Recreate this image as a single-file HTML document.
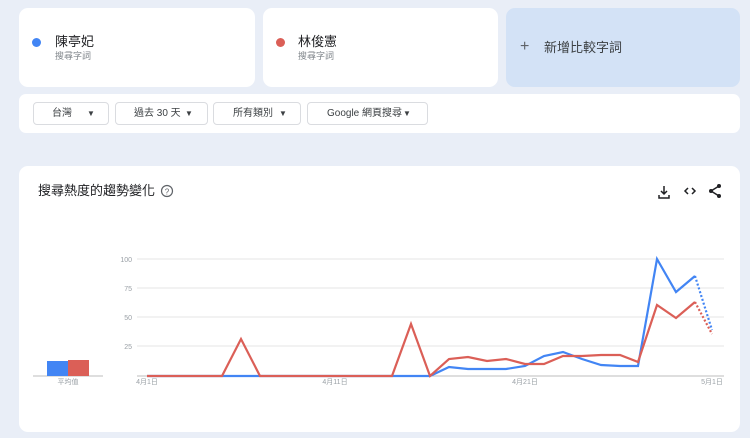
<!DOCTYPE html>
<html><head><meta charset="utf-8"><style>
*{margin:0;padding:0;box-sizing:border-box}
body{width:750px;height:438px;background:#e9eef7;font-family:"Liberation Sans","Noto Sans CJK TC",sans-serif;position:relative;overflow:hidden;color:#202124}
.card{position:absolute;background:#fff;border-radius:9px}
.dot{position:absolute;width:9px;height:9px;border-radius:50%}
.t{position:absolute;font-size:13px;line-height:16px}
.s{position:absolute;font-size:9px;line-height:11px;color:#80868b}
.btn{position:absolute;top:102px;height:23px;border:1px solid #dadce0;border-radius:4px;font-size:10px;color:#3c4043;line-height:22px;background:#fff}
.btn span{position:absolute}
</style></head><body>
<div class="card" style="left:19px;top:8px;width:236px;height:79px">
<div class="dot" style="left:13px;top:30px;background:#4285f4"></div>
<div class="t" style="left:36px;top:26px">陳亭妃</div>
<div class="s" style="left:36px;top:43px">搜尋字詞</div></div>
<div class="card" style="left:263px;top:8px;width:235px;height:79px">
<div class="dot" style="left:13px;top:30px;background:#db5f57"></div>
<div class="t" style="left:35px;top:26px">林俊憲</div>
<div class="s" style="left:35px;top:43px">搜尋字詞</div></div>
<div class="card" style="left:506px;top:8px;width:234px;height:79px;background:#d3e2f6">
<div class="t" style="left:14px;top:31px;color:#5f6368;font-size:16px">+</div>
<div class="t" style="left:38px;top:32px;color:#3c4043">新增比較字詞</div></div>
<div class="card" style="left:19px;top:94px;width:721px;height:39px;border-radius:7px"></div>
<div class="btn" style="left:33px;width:76px"><span style="left:18px">台灣</span><span style="left:53px;font-size:8px">▼</span></div>
<div class="btn" style="left:115px;width:93px"><span style="left:18px">過去 30 天</span><span style="left:69px;font-size:8px">▼</span></div>
<div class="btn" style="left:213px;width:88px"><span style="left:19px">所有類別</span><span style="left:65px;font-size:8px">▼</span></div>
<div class="btn" style="left:307px;width:121px"><span style="left:19px">Google 網頁搜尋</span><span style="left:95px;font-size:8px">▼</span></div>
<div class="card" style="left:19px;top:166px;width:721px;height:266px"></div>
<div class="t" style="left:38px;top:183px;font-size:13px">搜尋熱度的趨勢變化</div>
<svg style="position:absolute;left:0;top:0" width="750" height="438">
<circle cx="167" cy="191" r="5.5" fill="none" stroke="#5f6368" stroke-width="1.2"/>
<text x="167" y="194.5" font-size="8" text-anchor="middle" fill="#5f6368" font-family="Liberation Sans">?</text>
<g stroke="#202124" stroke-width="1.5" fill="none">
<path d="M664 186v8M661 191l3 3 3-3M659 195v3h10v-3"/>
<path d="M688 188l-3 3 3 3M692 188l3 3-3 3"/>
<path d="M719 186l-8 5 8 5"/></g>
<g fill="#202124"><circle cx="719" cy="186" r="2"/><circle cx="711" cy="191" r="2"/><circle cx="719" cy="196" r="2"/></g>
<g stroke="#e6e6e6" stroke-width="1">
<line x1="137" y1="259" x2="724" y2="259"/><line x1="137" y1="288" x2="724" y2="288"/>
<line x1="137" y1="317" x2="724" y2="317"/><line x1="137" y1="346" x2="724" y2="346"/></g>
<line x1="137" y1="376" x2="724" y2="376" stroke="#bdbdbd"/>
<line x1="33" y1="376" x2="103" y2="376" stroke="#bdbdbd"/>
<g font-size="7" fill="#9aa0a6" font-family="Liberation Sans" text-anchor="end">
<text x="132" y="262">100</text><text x="132" y="291">75</text><text x="132" y="320">50</text><text x="132" y="349">25</text></g>
<g font-size="7" fill="#9aa0a6" font-family="Liberation Sans,Noto Sans CJK TC" text-anchor="middle">
<text x="147" y="384">4月1日</text><text x="335" y="384">4月11日</text><text x="525" y="384">4月21日</text><text x="712" y="384">5月1日</text>
<text x="68" y="384">平均值</text></g>
<rect x="47" y="361" width="21" height="15" fill="#4285f4"/>
<rect x="68" y="360" width="21" height="16" fill="#db5f57"/>
<polyline fill="none" stroke="#4285f4" stroke-width="2.2" points="147,376 430,376 449,367 468,369 487,369 506,369 525,366 544,356 563,352 582,359 601,365 620,366 638,366 657,259 676,292 695,276"/>
<polyline fill="none" stroke="#db5f57" stroke-width="2.2" points="147,376 222,376 241,339 260,376 392,376 411,324 430,376 449,359 468,357 487,361 506,359 525,364 544,364 563,356 582,356 601,355 620,355 638,362 657,305 676,318 695,302"/>
<line x1="695" y1="276" x2="712" y2="330" stroke="#4285f4" stroke-width="2.2" stroke-dasharray="2,2"/>
<line x1="695" y1="302" x2="712" y2="334" stroke="#db5f57" stroke-width="2.2" stroke-dasharray="2,2"/>
</svg>
</body></html>
